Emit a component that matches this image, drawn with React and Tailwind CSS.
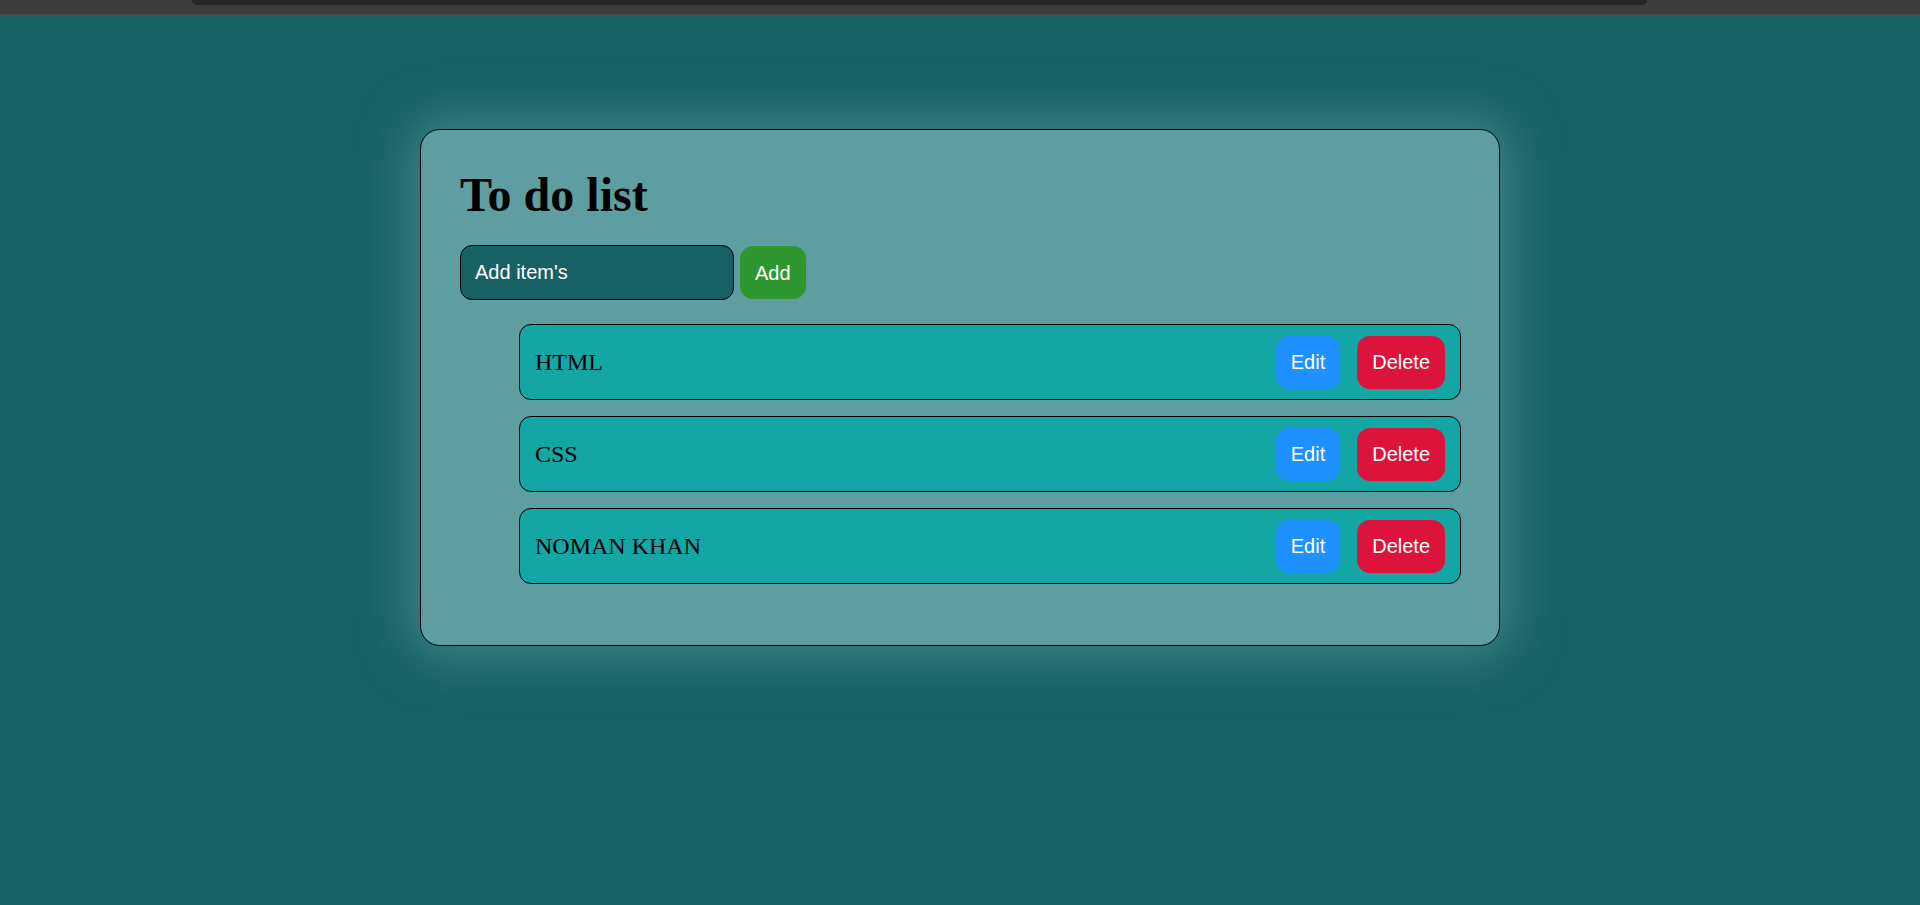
import React, { useState } from 'react';

const TodoItem = ({ text, onEdit, onDelete }) => (
  <li className="flex items-center justify-between h-[76px] pl-[15px] pr-[15px] bg-[#13a6a4] border border-black rounded-[12px]">
    <span className="text-[24px] text-black font-['Liberation_Serif',serif]">{text}</span>
    <div className="flex items-center gap-[17px]">
      <button
        onClick={onEdit}
        className="h-[53px] px-[15px] rounded-[13px] bg-[#1e90ff] text-white text-[20px] font-['Liberation_Sans',Arial,sans-serif]"
      >
        Edit
      </button>
      <button
        onClick={onDelete}
        className="h-[53px] px-[15px] rounded-[13px] bg-[#dc143c] text-white text-[20px] font-['Liberation_Sans',Arial,sans-serif]"
      >
        Delete
      </button>
    </div>
  </li>
);

const App = () => {
  const [items, setItems] = useState(['HTML', 'CSS', 'NOMAN KHAN']);
  const [value, setValue] = useState('');

  const addItem = () => {
    if (!value.trim()) return;
    setItems([...items, value.trim()]);
    setValue('');
  };

  return (
    <div className="min-h-[905px] bg-[#176164] flex flex-col">
      {/* browser chrome strip */}
      <div className="h-[15px] bg-[#3c3c3c] border-b border-[#4a4a4a] shrink-0">
        <div className="ml-[192px] w-[1455px] h-[5px] bg-[#262626] rounded-b-[10px]" />
      </div>

      <div className="flex justify-center pt-[114px]">
        <div className="w-[1080px] h-[517px] bg-[#5f9ea0] border border-black rounded-[20px] pl-[39px] pr-[38px] pt-[41px] shadow-[0_0_50px_10px_rgba(95,158,160,0.6)]">
          <h1 className="text-[48px] leading-none font-bold text-black font-['Liberation_Serif',serif]">To do list</h1>

          <div className="flex items-center gap-[6px] mt-[26px]">
            <input
              value={value}
              onChange={(e) => setValue(e.target.value)}
              placeholder="Add item's"
              className="w-[274px] h-[55px] px-[14px] bg-[#176063] border border-black rounded-[12px] text-white placeholder:text-white text-[20px] outline-none font-['Liberation_Sans',Arial,sans-serif]"
            />
            <button
              onClick={addItem}
              className="h-[53px] px-[15px] rounded-[13px] bg-[#2f972f] text-white text-[20px] font-['Liberation_Sans',Arial,sans-serif]"
            >
              Add
            </button>
          </div>

          <ul className="mt-[24px] pl-[59px] flex flex-col gap-[16px]">
            {items.map((item, i) => (
              <TodoItem
                key={i}
                text={item}
                onEdit={() => {}}
                onDelete={() => setItems(items.filter((_, j) => j !== i))}
              />
            ))}
          </ul>
        </div>
      </div>
    </div>
  );
};

export default App;
